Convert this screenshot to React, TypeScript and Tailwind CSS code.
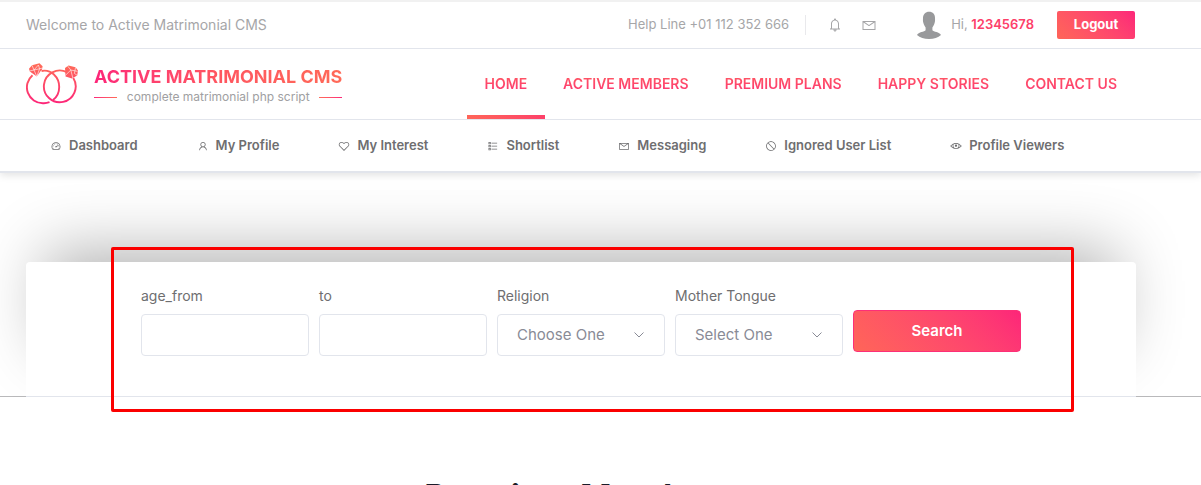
import { LiaBell, LiaEnvelope, LiaUser, LiaHeart, LiaListSolid, LiaBanSolid, LiaEyeSolid, LiaTachometerAltSolid } from 'react-icons/lia';

const navItems = ['HOME', 'ACTIVE MEMBERS', 'PREMIUM PLANS', 'HAPPY STORIES', 'CONTACT US'];

const memberLinks = [
  { label: 'Dashboard', Icon: LiaTachometerAltSolid },
  { label: 'My Profile', Icon: LiaUser },
  { label: 'My Interest', Icon: LiaHeart },
  { label: 'Shortlist', Icon: LiaListSolid },
  { label: 'Messaging', Icon: LiaEnvelope },
  { label: 'Ignored User List', Icon: LiaBanSolid },
  { label: 'Profile Viewers', Icon: LiaEyeSolid },
];

function Rings() {
  return (
    <svg viewBox="0 0 52 42" className="h-[42px] w-[52px] shrink-0" fill="none" aria-hidden="true">
      <defs>
        <linearGradient id="ring" gradientUnits="userSpaceOnUse" x1="0" y1="2" x2="0" y2="41">
          <stop stopColor="#ff6a58" />
          <stop offset="1" stopColor="#fd2579" />
        </linearGradient>
      </defs>
      <g stroke="url(#ring)" strokeWidth="1.9">
        <path d="M15.5 8C25 6 33.2 14 33.2 24C33.2 29.5 30.8 34.2 27 37" />
        <path d="M23.5 39.2A15.8 15.8 0 0 1 17 40.2A15.9 15.9 0 0 1 6.5 12.2" />
        <path d="M41 9.2A15.9 15.9 0 1 0 47.3 15" />
      </g>
      <g fill="url(#ring)">
        <path d="M3 5.8L6 2.2L13.5 0.2L16.6 3.3L16 6.2L10.8 13.6L3.8 8.6Z" />
        <path d="M39 5L42.5 2.4L49.5 4.2L52 7.5L51.2 12.4L46 15.5L39.5 13.5Z" />
      </g>
      <g stroke="#fff" strokeWidth="0.6">
        <path d="M3.6 8L16 5.2M6 2.4L8 7L12.4 2L13.6 5.8L10.8 13.4L8 7M41.8 3.2L44.8 7L51.6 8.4M39.4 12.4L44.8 7L46.8 15M49.6 4.4L48.4 10.4L51 12.2" />
      </g>
    </svg>
  );
}

function Avatar() {
  return (
    <svg viewBox="0 0 24 28" className="h-7 w-6" fill="#98999b" aria-hidden="true">
      <path d="M12 0.8C16 0.8 18 3.4 18 7C18 9 18.3 9.8 17.6 12C17 14 15.9 15.6 15.4 16.6V19.2C16.4 21 22.6 20.8 24 24C21 26.5 17 28 12 28C7 28 3 26.5 0 24C1.4 20.8 7.6 21 8.6 19.2V16.6C8.1 15.6 7 14 6.4 12C5.7 9.8 6 9 6 7C6 3.4 8.6 0.8 12 0.8Z" />
    </svg>
  );
}

const inputClass = 'block h-[42px] w-full appearance-none rounded border border-[#e2e5ec] bg-white px-[19px] text-[15px] text-[#898b96] outline-none';
const labelClass = 'text-sm leading-5 text-[#6e6e70]';

function SelectField({ id, label, placeholder }: { id: string; label: string; placeholder: string }) {
  return (
    <div className="flex flex-1 flex-col gap-2">
      <label htmlFor={id} className={labelClass}>{label}</label>
      <div className="relative">
        <select id={id} className={inputClass}>
          <option>{placeholder}</option>
        </select>
        <svg viewBox="0 0 10 6" className="pointer-events-none absolute top-[18px] right-[21px] h-1.5 w-2.5" fill="none" stroke="#898b96" aria-hidden="true">
          <path d="M0.5 0.5L5 5L9.5 0.5" />
        </svg>
      </div>
    </div>
  );
}

export default function App() {
  return (
    <div className="relative h-screen overflow-hidden bg-white font-['Inter','Liberation_Sans',sans-serif]">
      <header className="relative z-10 border-t-2 border-b-2 border-t-[#f1f1f1] border-b-[#e2e5ec] bg-white shadow-[0_2px_8px_rgba(0,0,0,0.12)]">
        <div className="flex h-[47px] items-center border-b border-[#e2e5ec] pr-[66px] pl-[26px] text-[13px] text-[#a6a6a8]">
          <span className="text-sm">Welcome to Active Matrimonial CMS</span>
          <div className="ml-auto flex items-center">
            <span className="flex h-5 items-center border-r border-[#e9e9ec] pr-4">Help Line +01 112 352 666</span>
            <button type="button" aria-label="Notifications" className="ml-[21px]"><LiaBell className="h-4 w-4" /></button>
            <button type="button" aria-label="Messages" className="ml-[18px]"><LiaEnvelope className="h-4 w-4" /></button>
            <span className="ml-10"><Avatar /></span>
            <span className="ml-2.5">Hi, <strong className="font-semibold text-[#fd4069]">12345678</strong></span>
            <a href="#logout" className="ml-[23px] flex h-7 w-[78px] items-center justify-center rounded-xs bg-linear-45 from-[#ff6558] to-[#fd2579] font-bold text-white">Logout</a>
          </div>
        </div>
        <div className="flex h-[71px] items-stretch justify-between border-b border-[#e2e5ec] pr-[66px] pl-[26px]">
          <a href="#home" className="flex items-center gap-4">
            <Rings />
            <span className="flex flex-col pt-0.5">
              <span className="bg-linear-to-r from-[#fd2579] via-[#ff5560] to-[#ff6a58] bg-clip-text text-[18px] leading-6 font-bold text-transparent">ACTIVE MATRIMONIAL CMS</span>
              <span className="flex items-center justify-between text-xs leading-4 text-[#a0a0a2]">
                <span className="h-px w-[23px] bg-linear-to-r from-[#fd2579] to-[#ff6a58]" />
                complete matrimonial php script
                <span className="h-px w-[23px] bg-linear-to-r from-[#ff6a58] to-[#fd2579]" />
              </span>
            </span>
          </a>
          <nav className="flex text-sm font-semibold">
            {navItems.map((item, i) => (
              <a key={item} href="#nav" className="flex flex-col">
                <span className={i === 0 ? 'flex flex-1 items-center px-[18px] pt-1' : 'flex flex-1 items-center px-[18px]'}>
                  <span className="bg-linear-to-b from-[#ff5a60] to-[#fd2f74] bg-clip-text text-transparent">{item}</span>
                </span>
                {i === 0 && <span className="h-1 bg-linear-to-r from-[#ff6558] to-[#fd4069]" />}
              </a>
            ))}
          </nav>
        </div>
        <nav className="flex h-[51px] items-center gap-[59px] pl-[50px] text-[13px] font-semibold text-[#6e6e70]">
          {memberLinks.map(({ label, Icon }) => (
            <a key={label} href="#member" className="flex items-center gap-[7px] whitespace-nowrap">
              <Icon className="h-3 w-3" />
              {label}
            </a>
          ))}
        </nav>
      </header>
      <section className="overflow-hidden pt-[89px] pr-[65px] pl-[26px] shadow-[inset_0_-1px_0_#b9b9bb]">
        <form className="flex h-[135px] justify-center gap-2.5 rounded-t border-b border-[#e2e5ec] bg-white pt-6 pr-[115px] pl-[115px] shadow-[0_-30px_64px_-18px_rgba(0,0,0,0.3)]">
          <div className="flex flex-1 flex-col gap-2">
            <label htmlFor="age-from" className={labelClass}>age_from</label>
            <input id="age-from" className={inputClass} />
          </div>
          <div className="flex flex-1 flex-col gap-2">
            <label htmlFor="age-to" className={labelClass}>to</label>
            <input id="age-to" className={inputClass} />
          </div>
          <SelectField id="religion" label="Religion" placeholder="Choose One" />
          <SelectField id="tongue" label="Mother Tongue" placeholder="Select One" />
          <div className="flex-1 pt-6">
            <button type="button" className="h-[42px] w-full rounded border border-[#fd2f78] bg-linear-45 from-[#ff6558] to-[#fd2579] text-[15px] font-semibold text-white">Search</button>
          </div>
        </form>
      </section>
      <h2 className="mt-[76px] pr-[39px] text-center text-[34px] leading-[48px] font-bold text-[#1b1b28]">Premium Members</h2>
      <div className="pointer-events-none absolute top-[247px] right-[127px] left-[111px] z-20 h-[165px] rounded-xs border-3 border-[#fb0000]" />
    </div>
  );
}
